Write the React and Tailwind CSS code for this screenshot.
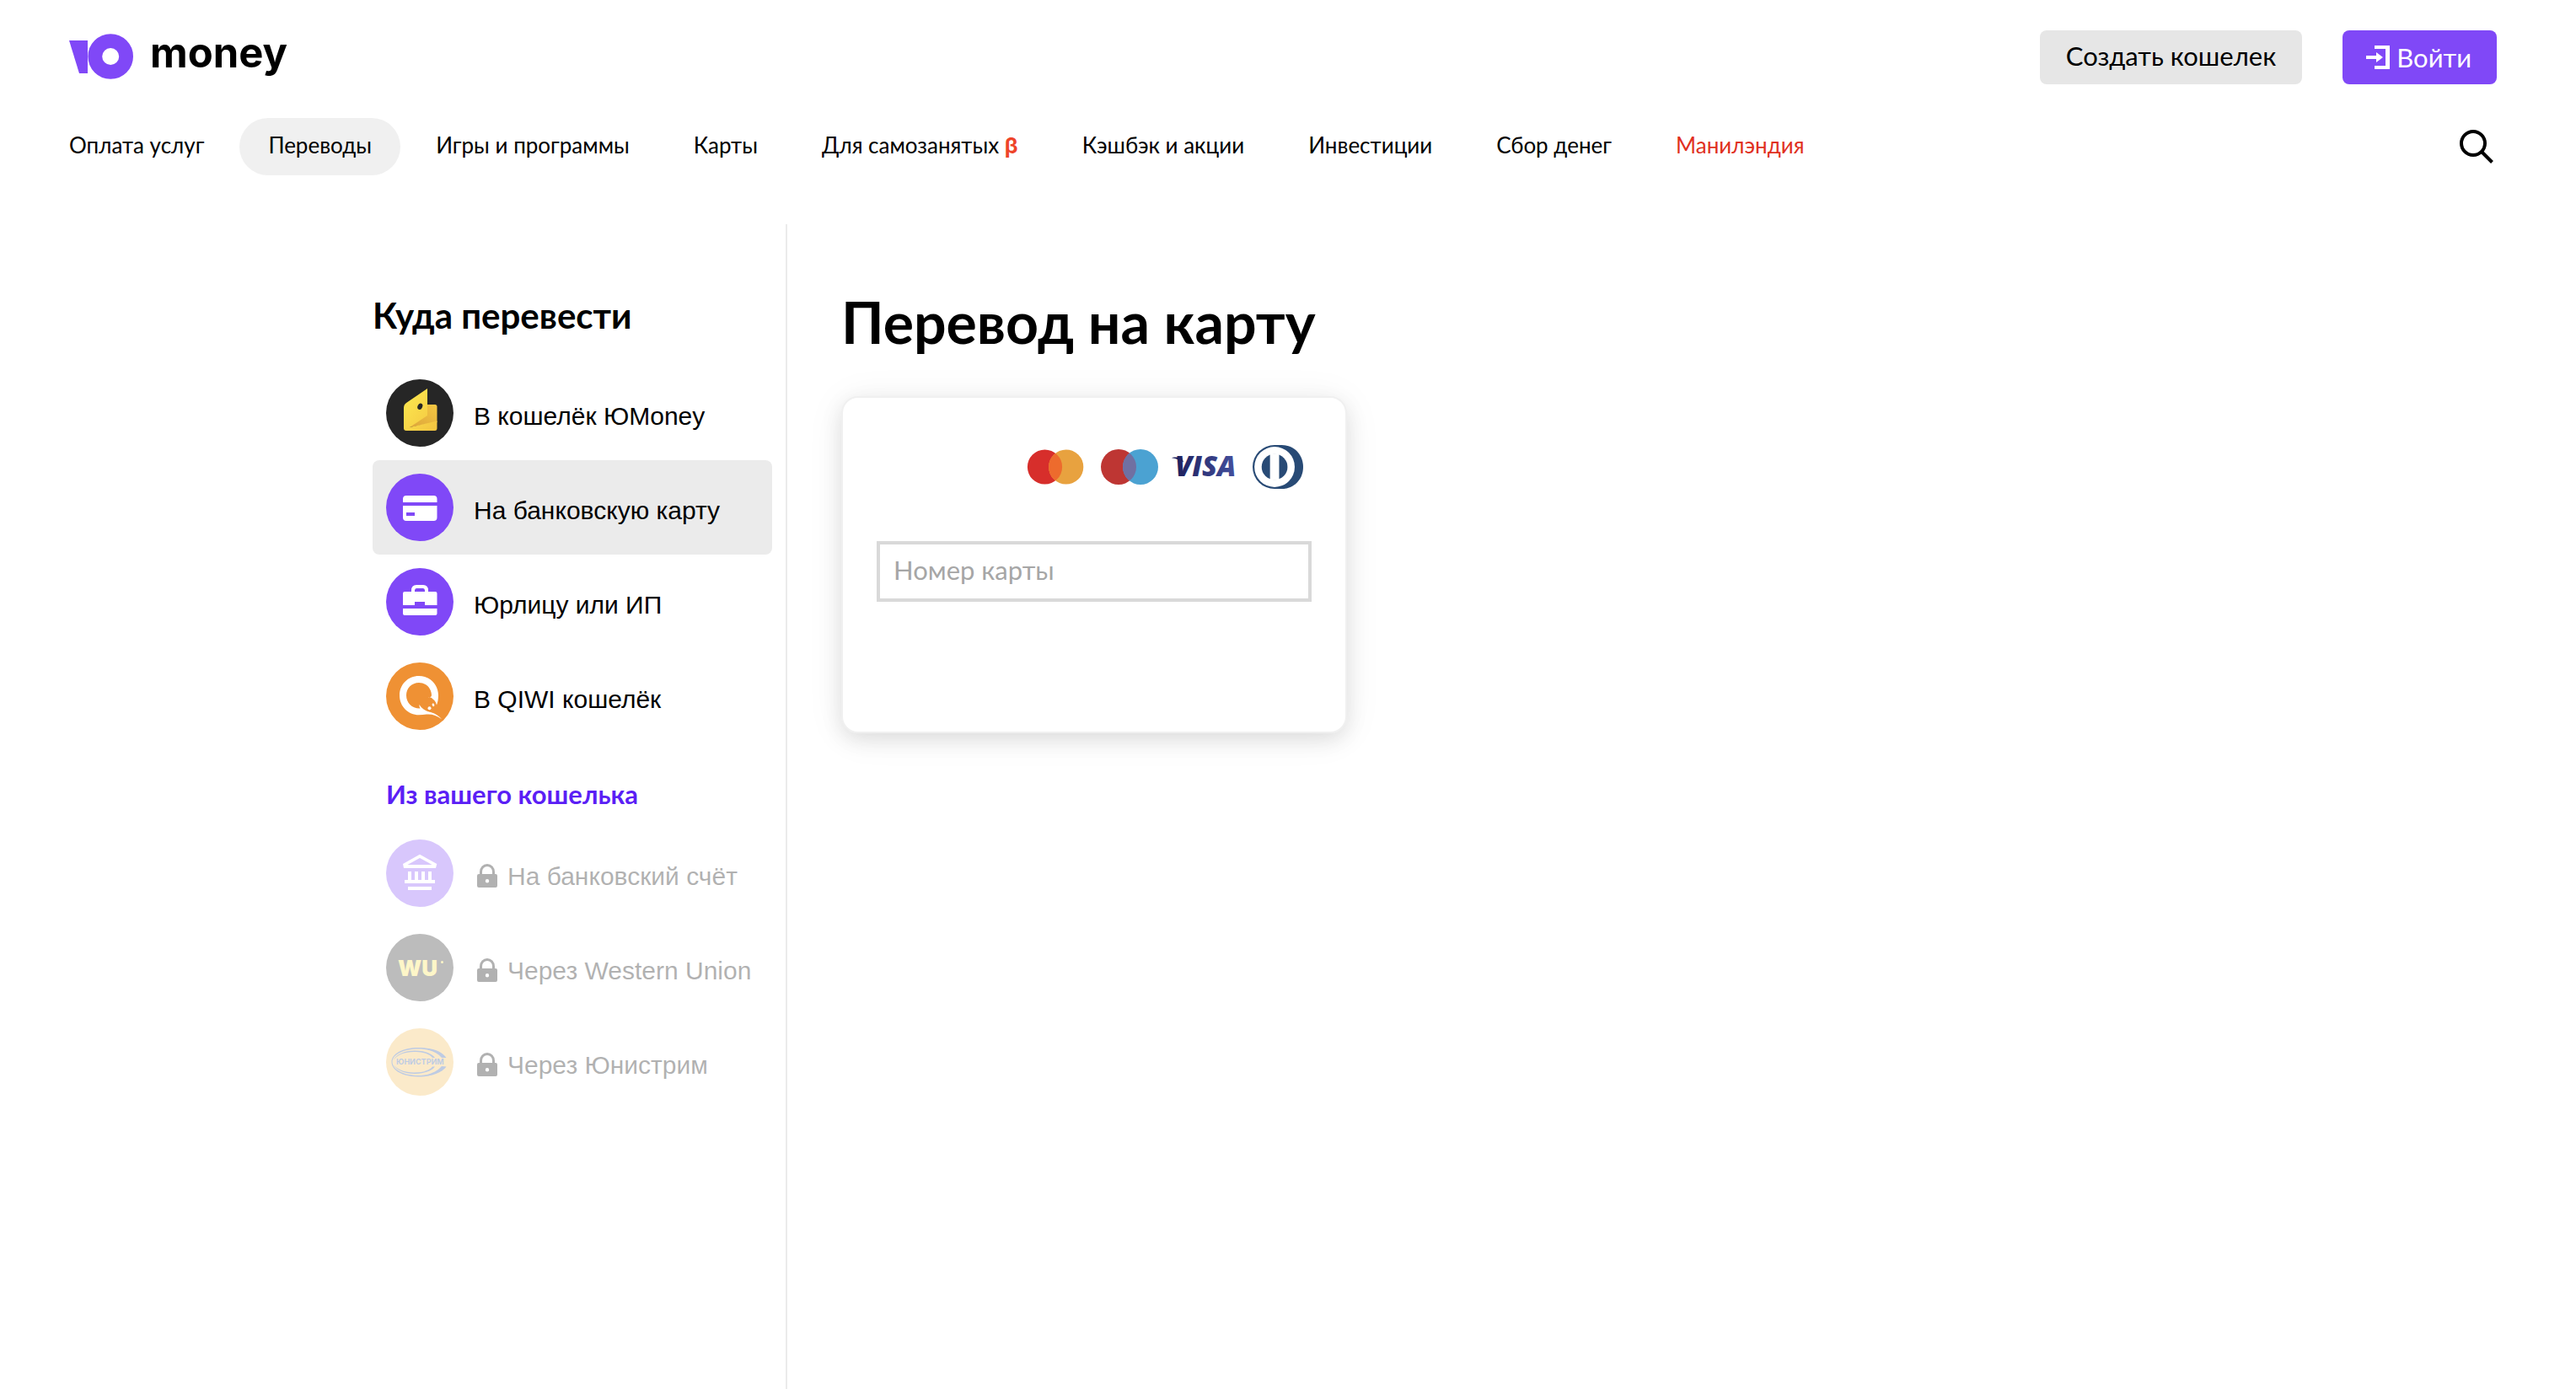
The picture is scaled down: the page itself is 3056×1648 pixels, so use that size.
const navItems = [
  { label: 'Оплата услуг' },
  { label: 'Переводы', active: true },
  { label: 'Игры и программы' },
  { label: 'Карты' },
  { label: 'Для самозанятых', beta: true },
  { label: 'Кэшбэк и акции' },
  { label: 'Инвестиции' },
  { label: 'Сбор денег' },
  { label: 'Манилэндия', accent: true },
];

const LogoMark = () => (
  <svg width="76" height="54" viewBox="0 0 76 54" aria-hidden="true">
    <path d="M0 8h22v39H12z" fill="#8048f7" />
    <circle cx="49.2" cy="27" r="18.4" fill="none" stroke="#8048f7" strokeWidth="16.8" />
  </svg>
);

const LoginIcon = () => (
  <svg width="28" height="28" viewBox="0 0 28 28" fill="#fff" aria-hidden="true">
    <path d="M10 0h18v28H10v-4h13V4H10z" />
    <path d="M0 12h12V8l8 6-8 6v-4H0z" />
  </svg>
);

const SearchIcon = () => (
  <svg width="40" height="40" viewBox="0 0 40 40" fill="none" stroke="#000" strokeWidth="4" aria-hidden="true">
    <circle cx="16" cy="16" r="14" />
    <path d="M26 26l12.5 12.5" />
  </svg>
);

const LockIcon = () => (
  <svg className="ml-1" width="24" height="28" viewBox="0 0 24 28" aria-hidden="true">
    <path d="M4.5 13V9.500a7.500 8 0 0 1 15 0V13" fill="none" stroke="#000" strokeWidth="3" />
    <path fillRule="evenodd" d="M2 12h20a2 2 0 0 1 2 2v12a2 2 0 0 1-2 2H2a2 2 0 0 1-2-2V14a2 2 0 0 1 2-2zm10 6a2.200 2.200 0 1 0 0 4.400a2.200 2.200 0 0 0 0-4.400z" fill="#000" />
  </svg>
);

const Disc = ({ color, children }) => (
  <svg className="shrink-0" width="80" height="80" viewBox="0 0 80 80" aria-hidden="true">
    <circle cx="40" cy="40" r="40" fill={color} />
    {children}
  </svg>
);

const WalletIcon = () => (
  <Disc color="#262626">
    <defs>
      <linearGradient id="flap" x1="0" y1="0" x2="1" y2="1">
        <stop offset="0" stopColor="#fdeb50" />
        <stop offset="1" stopColor="#f3c340" />
      </linearGradient>
      <linearGradient id="inside" x1="0" y1="1" x2="1" y2="0">
        <stop offset="0" stopColor="#dca43a" />
        <stop offset="1" stopColor="#f5c842" />
      </linearGradient>
    </defs>
    <path d="M44 30h14q2.500 0 2.500 2.500V51L28 57z" fill="url(#inside)" />
    <path d="M21 34q0-4 3-6L49 11v32L28 57l32.500-7.500V58q0 3-2.500 3H24q-3 0-3-3z" fill="url(#flap)" />
    <ellipse cx="40.300" cy="32.300" rx="2.800" ry="3.800" transform="rotate(25 40.3 32.3)" fill="#262626" />
  </Disc>
);

const CardIcon = () => (
  <Disc color="#8048f7">
    <path d="M20 34v-4q0-4 4-4h32.500q4 0 4 4v4zM20 38h40.500v14q0 4-4 4H24q-4 0-4-4z" fill="#fff" />
    <path d="M24 46h10v4H24z" fill="#8048f7" />
  </Disc>
);

const CaseIcon = () => (
  <Disc color="#8048f7">
    <path d="M32 29v-2.500q0-4.500 4-4.500h8q4 0 4 4.500V29" fill="none" stroke="#fff" strokeWidth="4" />
    <path d="M22 28h36.500q2 0 2 2v14H46v-4H34v4H20V30q0-2 2-2zM20 48h40.500v6q0 2-2 2H22q-2 0-2-2z" fill="#fff" />
  </Disc>
);

const QiwiIcon = () => (
  <Disc color="#ef9134">
    <path
      d="M39 16C52 16 62 26 62 39C62 43 61.5 47 60 50.500C59 46 56.500 44 55.500 43.500C54 41.800 52.500 41 50 41.500C52 41 53.500 41.500 54 39C54 30.500 47.500 24 39 24C30.500 24 24 30.500 24 39C24 48 31 55 40.500 54.500C39.500 53 39.300 51.500 39.500 50C42 54.500 47 58 53 59C59 60.500 63 64 66 67.200C60 63 55 61 48 61.500C45 62 42 62.300 39 62.300C26 62.300 16 52 16 39C16 26 26 16 39 16Z"
      fill="#fff"
    />
    <circle cx="51.500" cy="54.300" r="2" fill="#fff" />
    <ellipse cx="56" cy="50.300" rx="1.300" ry="1.900" transform="rotate(-20 56 50.3)" fill="#fff" />
  </Disc>
);

const BankIcon = () => (
  <Disc color="#8048f7">
    <path
      fillRule="evenodd"
      d="M40 17.700L60.300 29L59 34H21L20 29zM40 22L25.500 30H54.500zM26 38h4v10h4V38h4v10h4V38h4v10h4V38h4v10h4v4H22v-4h4zM26 56h28v4H26z"
      fill="#fff"
    />
  </Disc>
);

const WesternIcon = () => (
  <Disc color="#262626">
    <text x="14" y="50" className="font-[Inter] text-[26px] font-black" fill="#fbe34c">WU</text>
    <circle cx="66.500" cy="33.500" r="1.500" fill="#fbe34c" />
  </Disc>
);

const UnistreamIcon = () => (
  <Disc color="#f5bc54">
    <g fill="#2a57a5">
      <path d="M71.500 35C65 26 52 23 38 23C20 23 6.500 30 6.500 40C6.500 50 20 57.500 38 57.500C52 57.500 65 54 71.500 45.500L66 45C60 52 50 56 38 56C21 56 7.500 49 7.500 40C7.500 31 21 24.500 38 24.500C50 24.500 60 28 66 35Z" />
      <path d="M58 35C54 29 44 26.500 34 26.500C22 26.500 12 31 8.500 38C13 31.500 22 28 33 28C43 28 51 30 55 35ZM58 45.500C54 51 44 54 34 54C22 54 12 49.500 8.500 43C13 49 22 52.500 33 52.500C43 52.500 51 50.500 55 45.500Z" />
      <text x="12" y="43" className="font-[Inter] text-[9px] font-bold">ЮНИСТРИМ</text>
    </g>
  </Disc>
);

const PaymentLogos = () => (
  <div className="flex items-center justify-end gap-4 pr-[10px]">
    <svg width="72" height="54" viewBox="0 0 72 54" role="img" aria-label="Mastercard">
      <clipPath id="mc"><circle cx="21.500" cy="27" r="20.600" /></clipPath>
      <circle cx="21.500" cy="27" r="20.600" fill="#d72e2b" />
      <circle cx="46.700" cy="27" r="20.600" fill="#e8a23f" />
      <circle cx="46.700" cy="27" r="20.600" fill="#ed6b2d" clipPath="url(#mc)" />
    </svg>
    <svg width="68" height="54" viewBox="0 0 68 54" role="img" aria-label="Maestro">
      <clipPath id="ms"><circle cx="21" cy="27" r="21" /></clipPath>
      <circle cx="21" cy="27" r="21" fill="#be3633" />
      <circle cx="47" cy="27" r="21" fill="#4ba2d2" />
      <circle cx="47" cy="27" r="21" fill="#7070a2" clipPath="url(#ms)" />
    </svg>
    <svg width="80" height="54" viewBox="0 0 80 54" role="img" aria-label="Visa">
      <defs>
        <linearGradient id="visa">
          <stop offset="0" stopColor="#1d1f5c" />
          <stop offset="1" stopColor="#44509e" />
        </linearGradient>
      </defs>
      <path d="M0 16.300q1-.8 3-.8h9l2 6Q8 17.500 0 16.300z" fill="#1d1f5c" />
      <text x="4" y="38" className="font-['Open_Sans'] text-[33px] font-extrabold italic" fill="url(#visa)">VISA</text>
    </svg>
    <svg width="60" height="54" viewBox="0 0 61 54" role="img" aria-label="Diners Club">
      <path d="M26.500 .5H35C50 .5 61 12 61 27S50 53.500 35 53.500H26.500A26.500 26.500 0 0 1 26.500 .5z" fill="#284a75" />
      <circle cx="26.500" cy="27" r="24.300" fill="#fff" />
      <circle cx="26.500" cy="27" r="15.600" fill="#284a75" />
      <path d="M21 11h11v32H21z" fill="#fff" />
    </svg>
  </div>
);

const targets = [
  { label: 'В кошелёк ЮMoney', Icon: WalletIcon },
  { label: 'На банковскую карту', Icon: CardIcon, active: true },
  { label: 'Юрлицу или ИП', Icon: CaseIcon },
  { label: 'В QIWI кошелёк', Icon: QiwiIcon },
];

const walletTargets = [
  { label: 'На банковский счёт', Icon: BankIcon },
  { label: 'Через Western Union', Icon: WesternIcon },
  { label: 'Через Юнистрим', Icon: UnistreamIcon },
];

const TargetRow = ({ label, Icon, active, locked }) => (
  <li>
    <a
      href="#"
      className={`flex h-28 items-center gap-6 rounded-lg pl-4 font-['Liberation_Sans',sans-serif] text-[30px] ${active ? 'bg-[#ebebeb]' : ''} ${locked ? 'opacity-30' : ''}`}
    >
      <Icon />
      <span className="flex items-center gap-3 pt-1.5 whitespace-nowrap">
        {locked && <LockIcon />}
        {label}
      </span>
    </a>
  </li>
);

export default function App() {
  return (
    <div className="flex min-h-screen flex-col bg-white font-[Lato,sans-serif] text-black">
      {/* Header */}
      <header className="pt-9 pr-[94px] pl-[82px]">
        <div className="flex items-center justify-between">
          <a href="#" className="flex items-center gap-5 pb-0.5">
            <LogoMark />
            <span className="pb-2 font-[Inter,sans-serif] text-[49px] leading-[52px] font-bold">money</span>
          </a>
          <div className="flex gap-12">
            <button className="h-16 rounded-lg bg-[#e6e6e6] px-[31px] pb-1 text-[31px]">Создать кошелек</button>
            <button className="flex h-16 items-center gap-2 rounded-lg bg-[#8048f7] pr-[30px] pl-7 text-[31px] text-white">
              <LoginIcon />
              Войти
            </button>
          </div>
        </div>

        <nav className="mt-10 flex items-center justify-between">
          <ul className="-ml-[34px] flex gap-2">
            {navItems.map(({ label, active, beta, accent }) => (
              <li key={label}>
                <a
                  href="#"
                  className={`block rounded-[34px] px-[34px] pb-1 text-[26px] leading-[64px] whitespace-nowrap ${active ? 'bg-[#f0f0f0]' : ''} ${accent ? 'text-[#e0301e]' : ''}`}
                >
                  {label}
                  {beta && <> <b className="font-[Inter,sans-serif] leading-none text-[#ee4429]">β</b></>}
                </a>
              </li>
            ))}
          </ul>
          <button className="pr-1" aria-label="Поиск">
            <SearchIcon />
          </button>
        </nav>
      </header>

      <div className="mt-[58px] flex flex-1">
        {/* Transfer targets */}
        <aside className="flex w-[934px] shrink-0 justify-end border-r-2 border-[#ebebeb] pt-[84px] pr-4">
          <div className="w-[474px]">
            <h2 className="mb-9 text-[42px] leading-[48px] font-bold">Куда перевести</h2>
            <ul>
              {targets.map((t) => (
                <TargetRow key={t.label} {...t} />
              ))}
            </ul>
            <h3 className="mt-10 mb-[18px] pl-4 text-[31px] leading-[40px] font-bold text-[#5b1ff5]">Из вашего кошелька</h3>
            <ul>
              {walletTargets.map((t) => (
                <TargetRow key={t.label} {...t} locked />
              ))}
            </ul>
          </div>
        </aside>

        {/* Card form */}
        <main className="flex-1 pt-[76px] pl-16">
          <h1 className="mb-12 text-[68px] leading-[80px] font-bold">Перевод на карту</h1>
          <form className="h-[400px] w-[600px] rounded-[20px] border-2 border-[#f0f0f0] bg-white px-10 pt-[55px] shadow-[0_8px_24px_rgba(0,0,0,0.10),0_4px_48px_rgba(0,0,0,0.06)]">
            <PaymentLogos />
            <input
              type="text"
              inputMode="numeric"
              aria-label="Номер карты"
              placeholder="Номер карты"
              className="mt-[61px] block h-[72px] w-full border-4 border-[#d9d9d9] px-4 pb-1 text-[31px] placeholder:text-[#a6a6a6]"
            />
          </form>
        </main>
      </div>
    </div>
  );
}
